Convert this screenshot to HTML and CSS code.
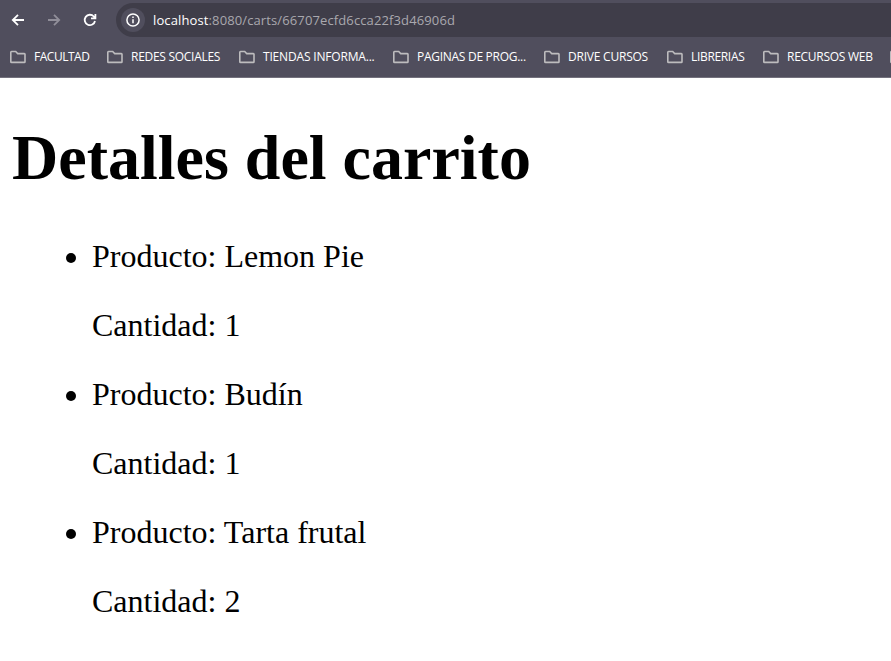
FILE: index.html
```
<!DOCTYPE html>
<html lang="es">
<head>
<meta charset="utf-8">
<title>Detalles del carrito</title>
<link rel="stylesheet" href="styles.css">
</head>
<body>
<svg class="defs" width="0" height="0"><symbol id="folder" viewBox="0 0 18 14"><path d="M1.8 2.2Q1.8 1.5 2.5 1.5H6.7L8.7 3.6H15.3Q16 3.6 16 4.3V11.7Q16 12.4 15.3 12.4H2.5Q1.8 12.4 1.8 11.7Z" fill="none" stroke="#bdbcbe" stroke-width="1.6"/></symbol></svg>
<header class="browser">
  <div class="toolbar">
    <svg class="nav" viewBox="0 0 16 16"><path d="M14 8H3M8 2.8L2.8 8L8 13.2" /></svg>
    <svg class="nav forward" viewBox="0 0 16 16"><path d="M2 8H13M8 2.8L13.2 8L8 13.2" /></svg>
    <svg class="nav reload" viewBox="0 0 16 16"><path d="M13 9A5.2 5.2 0 1 1 11.8 4.5L13 5.8M13.4 2V6.4H9" /></svg>
    <div class="address">
      <span class="info"><svg viewBox="0 0 16 16"><circle cx="8" cy="8" r="6.1"/><path d="M8 7.2V11.2M8 4.6V6.1"/></svg></span>
      <span class="url"><b>localhost</b>:8080/carts/66707ecfd6cca22f3d46906d</span>
    </div>
  </div>
  <nav class="bookmarks">
    <a><svg><use href="#folder"/></svg><span class="w1">FACULTAD</span></a>
    <a><svg><use href="#folder"/></svg><span class="w2">REDES SOCIALES</span></a>
    <a><svg><use href="#folder"/></svg><span class="w3">TIENDAS INFORMA...</span></a>
    <a><svg><use href="#folder"/></svg><span class="w4">PAGINAS DE PROG...</span></a>
    <a><svg><use href="#folder"/></svg><span class="w5">DRIVE CURSOS</span></a>
    <a><svg><use href="#folder"/></svg><span class="w6">LIBRERIAS</span></a>
    <a><svg><use href="#folder"/></svg><span class="w7">RECURSOS WEB</span></a>
    <a><svg><use href="#folder"/></svg></a>
  </nav>
</header>
<main>
  <h1>Detalles del carrito</h1>
  <ul>
    <li><p>Producto: Lemon Pie</p><p>Cantidad: 1</p></li>
    <li><p>Producto: Budín</p><p>Cantidad: 1</p></li>
    <li><p>Producto: Tarta frutal</p><p>Cantidad: 2</p></li>
  </ul>
</main>
</body>
</html>
```
FILE: styles.css
```
* { box-sizing: border-box; }
body { margin: 0; background: #fff; color: #000; overflow: hidden; }
.defs { display: block; }
.browser { height: 78px; background: #504e5d; border-bottom: 1px solid #73717d; overflow: hidden; font-family: "Open Sans", sans-serif; }
.toolbar { display: flex; align-items: center; height: 34px; margin-top: 3px; padding-left: 10px; }
.nav { width: 16px; height: 16px; flex: none; margin-right: 20px; fill: none; stroke: #fff; stroke-width: 1.8; }
.nav.forward { stroke: #908e99; }
.nav.reload { margin-right: 18px; }
.address { display: flex; align-items: center; flex: 1; height: 34px; padding-left: 5px; border-radius: 17px 0 0 17px; background: #3f3d49; }
.info { display: flex; align-items: center; justify-content: center; width: 24px; height: 24px; border-radius: 50%; background: #504e5d; }
.info svg { width: 16px; height: 16px; fill: none; stroke: #fff; stroke-width: 1.5; }
.url { margin-left: 8px; font-size: 13px; letter-spacing: 0.12px; color: #a9a8ae; white-space: nowrap; }
.url b { font-weight: 400; color: #fff; }
.bookmarks { display: grid; grid-template-columns: 97px 132px 154px 151px 123px 96px 127px 20px; height: 40px; padding-left: 9px; }
.bookmarks a { display: flex; align-items: center; color: #fff; font-size: 12px; white-space: nowrap; min-width: 0; }
.bookmarks svg { width: 18px; height: 14px; flex: none; margin-right: 7px; }
.bookmarks span { padding-bottom: 2px; }
.w1 { letter-spacing: -0.48px; }
.w2 { letter-spacing: -0.28px; }
.w3 { letter-spacing: -0.18px; }
.w4 { letter-spacing: -0.28px; }
.w5 { letter-spacing: -0.22px; }
.w6 { letter-spacing: -0.33px; }
.w7 { letter-spacing: -0.27px; }
main { padding: 43px 12px 0; font-family: "Liberation Serif", serif; font-size: 32px; line-height: 37px; }
h1 { margin: 0 0 43px; font-size: 64px; line-height: 74px; font-weight: 700; }
ul { margin: 0; padding-left: 80px; }
li p { margin: 0 0 32px; }
```
